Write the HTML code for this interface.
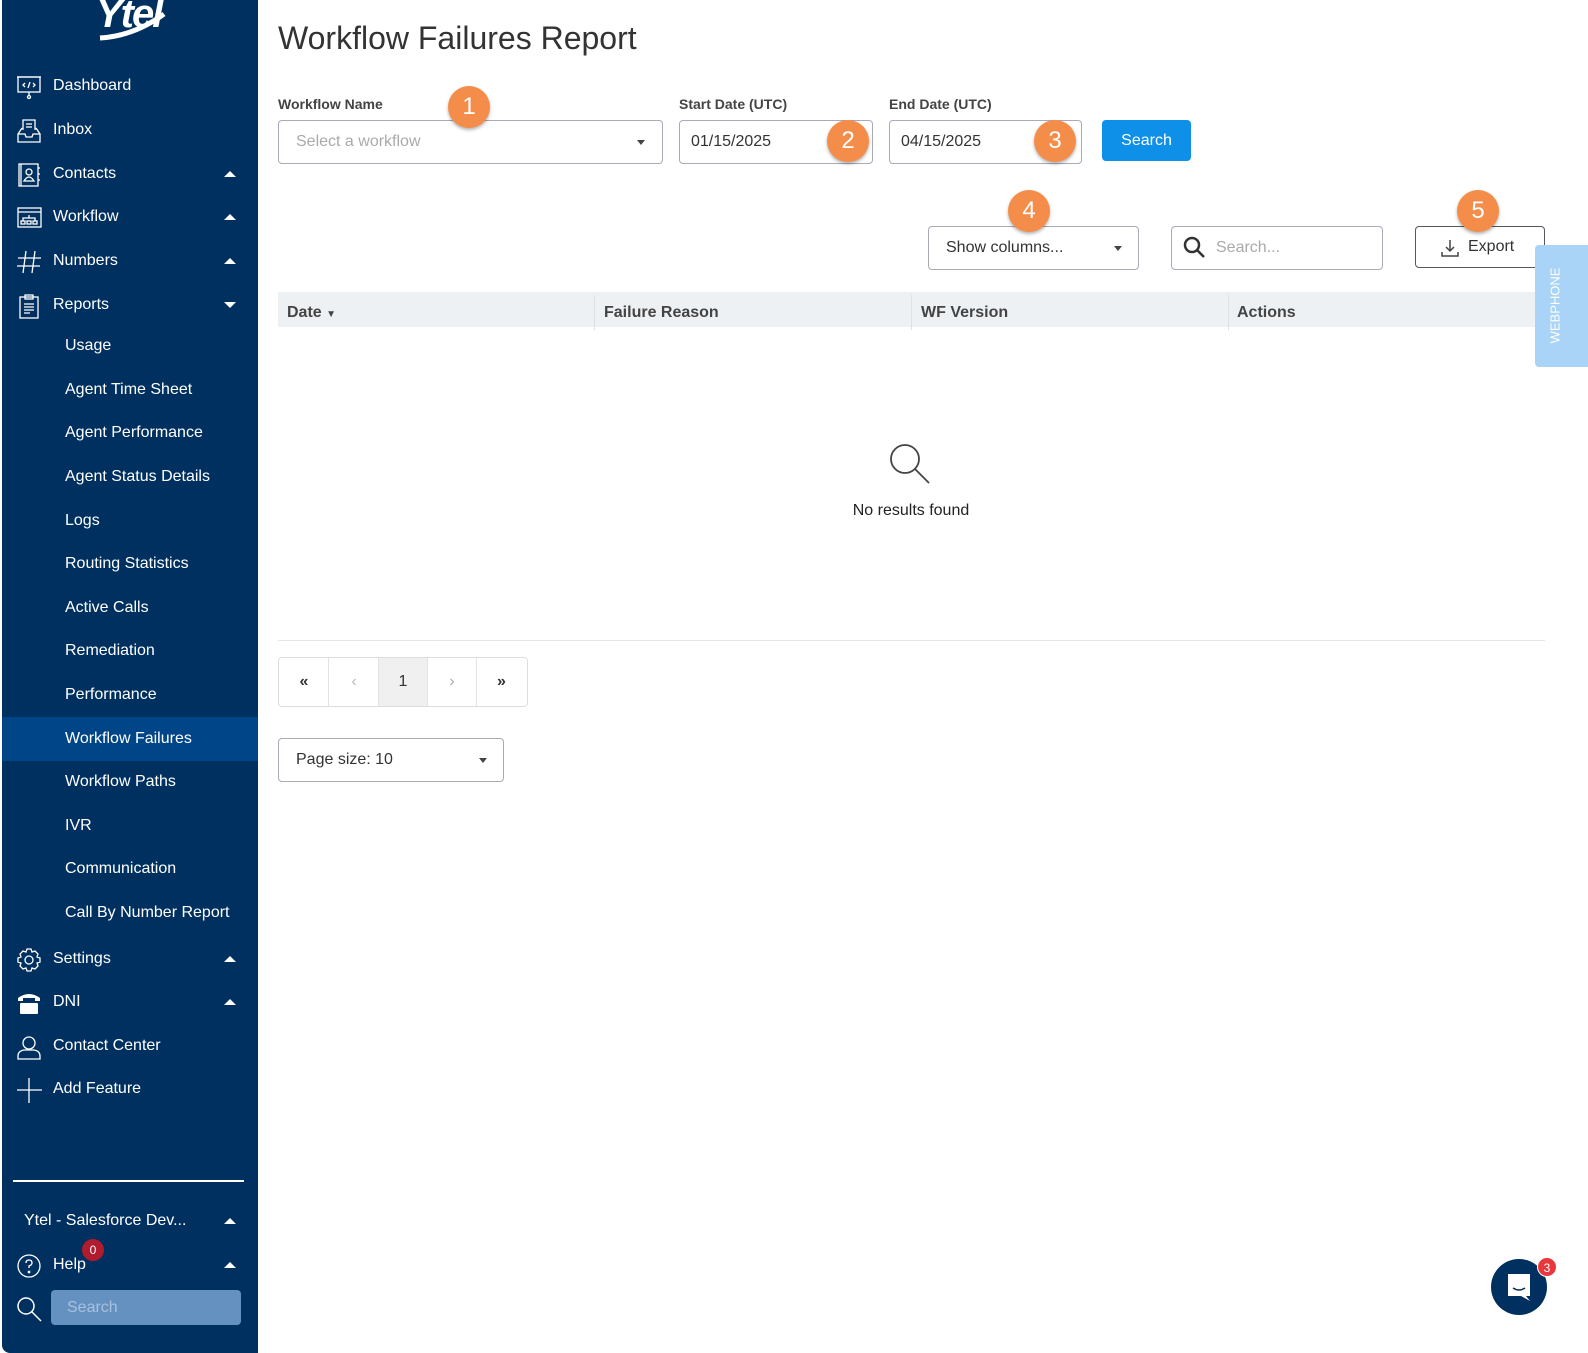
<!DOCTYPE html>
<html><head><meta charset="utf-8"><style>
*{box-sizing:border-box;margin:0;padding:0}
body{width:1588px;height:1353px;background:#fff;font-family:"Liberation Sans",sans-serif;position:relative;overflow:hidden;color:#333}
.sb{position:absolute;left:2px;top:0;width:256px;height:1353px;background:#00305f;color:#fff;border-bottom-left-radius:8px}
.it{position:absolute;left:0;width:256px;height:44px;font-size:16px;line-height:44px}
.it .ic{position:absolute;left:14px;top:10px;width:26px;height:26px}
.it .t{position:absolute;left:51px}
.it .ar{position:absolute;left:222px;top:19px;width:0;height:0;border-left:6px solid transparent;border-right:6px solid transparent;border-bottom:6px solid #fff}
.it .ar.d{border-bottom:0;border-top:6px solid #fff}
.sub{position:absolute;left:0;width:256px;height:44px;line-height:44px;font-size:16px;padding-left:63px}
.sub.a{background:#004587}
.abs{position:absolute}
.lbl{position:absolute;font-size:14px;font-weight:bold;color:#444}
.inp{position:absolute;border:1px solid #aab;border-radius:4px;height:44px;font-size:16px;line-height:42px;padding-left:17px;background:#fff}
.caret{position:absolute;width:0;height:0;border-left:4px solid transparent;border-right:4px solid transparent;border-top:5px solid #444}
.badge{position:absolute;width:42px;height:42px;border-radius:50%;background:#f58d4a;color:#fff;font-size:24px;text-align:center;line-height:42px;box-shadow:0 2px 3px rgba(0,0,0,.3)}
.th{position:absolute;top:295px;height:35px;line-height:35px;font-size:16px;font-weight:bold;color:#444;padding-left:9px;border-right:1px solid #dde1e5}
.pg{position:absolute;top:666px;width:49px;height:48px;line-height:48px;text-align:center;border-right:1px solid #e3e3e3;font-size:16px}
</style></head><body>
<div class="sb">
 <div class="abs" style="left:94px;top:-8px;font-size:40px;font-weight:bold;font-style:italic;letter-spacing:-2px">Ytel</div>
 <svg class="abs" style="left:92px;top:8px" width="80" height="34"><path d="M6 30 Q40 28 70 6" stroke="#fff" stroke-width="5" fill="none"/></svg>
 <div class="it" style="top:64px"><svg class="ic" viewBox="0 0 26 26" fill="none" stroke="#fff" stroke-width="1.3"><rect x="2" y="3" width="22" height="15"/><path d="M1 3h24M13 18v4"/><circle cx="13" cy="23" r="1.5"/><path d="M9 9l-2 2 2 2M17 9l2 2-2 2M14 8l-2 6"/></svg><span class="t">Dashboard</span></div>
 <div class="it" style="top:108px"><svg class="ic" viewBox="0 0 26 26" fill="none" stroke="#fff" stroke-width="1.3"><path d="M7 12V2h12v10M2 16l4-6M24 16l-4-6M2 16h7l1 3h6l1-3h7v8H2z"/><path d="M10 6h6M10 9h6"/></svg><span class="t">Inbox</span></div>
 <div class="it" style="top:152px"><svg class="ic" viewBox="0 0 26 26" fill="none" stroke="#fff" stroke-width="1.3"><rect x="3" y="2" width="19" height="22"/><path d="M5 2v22M22 6h2M22 12h2M22 18h2"/><circle cx="13" cy="10" r="3"/><path d="M8 19q5-8 10 0z"/></svg><span class="t">Contacts</span><span class="ar"></span></div>
 <div class="it" style="top:195px"><svg class="ic" viewBox="0 0 26 26" fill="none" stroke="#fff" stroke-width="1.3"><rect x="2" y="3" width="23" height="19"/><path d="M2 7h23M13 10v3M7 16v-3h12v3"/><rect x="5" y="16" width="4" height="3"/><rect x="11" y="16" width="4" height="3"/><rect x="17" y="16" width="4" height="3"/></svg><span class="t">Workflow</span><span class="ar"></span></div>
 <div class="it" style="top:239px"><svg class="ic" viewBox="0 0 26 26" fill="none" stroke="#fff" stroke-width="1.3"><path d="M10 2L7 24M19 2l-3 22M2 9h23M1 17h23"/></svg><span class="t">Numbers</span><span class="ar"></span></div>
 <div class="it" style="top:283px"><svg class="ic" viewBox="0 0 26 26" fill="none" stroke="#fff" stroke-width="1.3"><rect x="4" y="4" width="18" height="21"/><rect x="9" y="2" width="8" height="4"/><path d="M8 11h10M8 14h10M8 17h10M8 20h6"/></svg><span class="t">Reports</span><span class="ar d"></span></div>
 <div class="sub" style="top:324px">Usage</div>
 <div class="sub" style="top:368px">Agent Time Sheet</div>
 <div class="sub" style="top:411px">Agent Performance</div>
 <div class="sub" style="top:455px">Agent Status Details</div>
 <div class="sub" style="top:499px">Logs</div>
 <div class="sub" style="top:542px">Routing Statistics</div>
 <div class="sub" style="top:586px">Active Calls</div>
 <div class="sub" style="top:629px">Remediation</div>
 <div class="sub" style="top:673px">Performance</div>
 <div class="sub a" style="top:717px">Workflow Failures</div>
 <div class="sub" style="top:760px">Workflow Paths</div>
 <div class="sub" style="top:804px">IVR</div>
 <div class="sub" style="top:847px">Communication</div>
 <div class="sub" style="top:891px">Call By Number Report</div>
 <div class="it" style="top:937px"><svg class="ic" viewBox="0 0 26 26" fill="none" stroke="#fff" stroke-width="1.3"><circle cx="13" cy="13" r="4"/><path d="M11 2h4l1 3 3-1 3 3-1 3 3 1v4l-3 1 1 3-3 3-3-1-1 3h-4l-1-3-3 1-3-3 1-3-3-1v-4l3-1-1-3 3-3 3 1z"/></svg><span class="t">Settings</span><span class="ar"></span></div>
 <div class="it" style="top:980px"><svg class="ic" viewBox="0 0 26 26" fill="#fff"><path d="M2 8q11-8 22 0v3h-5V8H7v3H2z"/><rect x="4" y="13" width="18" height="11" rx="1"/></svg><span class="t">DNI</span><span class="ar"></span></div>
 <div class="it" style="top:1024px"><svg class="ic" viewBox="0 0 26 26" fill="none" stroke="#fff" stroke-width="1.3"><circle cx="13" cy="9" r="6"/><path d="M2 25v-3q0-5 6-6h10q6 1 6 6v3z"/></svg><span class="t">Contact Center</span></div>
 <div class="it" style="top:1067px"><svg class="ic" viewBox="0 0 26 26" fill="none" stroke="#fff" stroke-width="1.3"><path d="M13 1v25M1 13h25"/></svg><span class="t">Add Feature</span></div>
 <div class="abs" style="left:11px;top:1180px;width:231px;height:2px;background:#fff"></div>
 <div class="it" style="top:1199px"><span class="t" style="left:22px">Ytel - Salesforce Dev...</span><span class="ar"></span></div>
 <div class="it" style="top:1243px"><svg class="ic" viewBox="0 0 26 26" fill="none" stroke="#fff" stroke-width="1.3"><circle cx="13" cy="13" r="11"/><path d="M10 10q0-3 3-3t3 3q0 2-3 3v2"/><circle cx="13" cy="19" r=".7"/></svg><span class="t">Help</span><span class="ar"></span></div>
 <div class="abs" style="left:80px;top:1239px;width:22px;height:22px;border-radius:50%;background:#b01c2e;font-size:12px;text-align:center;line-height:22px">0</div>
 <svg class="abs" style="left:13px;top:1295px" width="28" height="28" fill="none" stroke="#fff" stroke-width="1.5"><circle cx="11" cy="11" r="8"/><path d="M17 17l9 9"/></svg>
 <div class="abs" style="left:49px;top:1290px;width:190px;height:35px;background:#6591c1;border-radius:4px;color:#a9c1dc;font-size:16px;line-height:35px;padding-left:16px">Search</div>
</div>

<div class="abs" style="left:278px;top:20px;font-size:32px;color:#333;font-weight:300">Workflow Failures Report</div>
<div class="lbl" style="left:278px;top:96px">Workflow Name</div>
<div class="lbl" style="left:679px;top:96px">Start Date (UTC)</div>
<div class="lbl" style="left:889px;top:96px">End Date (UTC)</div>
<div class="inp" style="left:278px;top:120px;width:385px;color:#aaa">Select a workflow<span class="caret" style="left:358px;top:19px"></span></div>
<div class="inp" style="left:679px;top:120px;width:194px;padding-left:11px">01/15/2025</div>
<div class="inp" style="left:889px;top:120px;width:193px;padding-left:11px">04/15/2025</div>
<div class="abs" style="left:1102px;top:120px;width:89px;height:41px;background:#0e8fe8;border-radius:4px;color:#fff;font-size:16px;text-align:center;line-height:41px">Search</div>
<div class="badge" style="left:448px;top:86px">1</div>
<div class="badge" style="left:827px;top:120px">2</div>
<div class="badge" style="left:1034px;top:120px">3</div>
<div class="inp" style="left:928px;top:226px;width:211px;color:#333">Show columns...<span class="caret" style="left:185px;top:19px"></span></div>
<div class="inp" style="left:1171px;top:226px;width:212px;padding-left:44px;color:#aaa">Search...</div>
<svg class="abs" style="left:1182px;top:235px" width="26" height="26" fill="none" stroke="#333" stroke-width="2.5"><circle cx="10" cy="10" r="7"/><path d="M15 15l7 7"/></svg>
<div class="inp" style="left:1415px;top:226px;width:130px;height:42px;line-height:40px;padding-left:52px;border-color:#556">Export</div>
<svg class="abs" style="left:1440px;top:238px" width="20" height="20" fill="none" stroke="#444" stroke-width="1.5"><path d="M10 2v11M6 9l4 4 4-4M2 14v4h16v-4"/></svg>
<div class="badge" style="left:1008px;top:190px">4</div>
<div class="badge" style="left:1457px;top:190px">5</div>

<div class="abs" style="left:278px;top:292px;width:1267px;height:35px;background:#eef1f4"></div>
<div class="th" style="left:278px;width:317px">Date <span style="font-size:10px">▼</span></div>
<div class="th" style="left:595px;width:317px">Failure Reason</div>
<div class="th" style="left:912px;width:317px">WF Version</div>
<div class="th" style="left:1228px;width:317px;border:0">Actions</div>
<div class="abs" style="left:1535px;top:245px;width:53px;height:122px;background:#a9d4f7;border-radius:4px 0 0 4px"></div>
<div class="abs" style="left:1515px;top:298px;width:80px;transform:rotate(-90deg);color:#fff;font-size:13px;text-align:center">WEBPHONE</div>

<svg class="abs" style="left:888px;top:442px" width="44" height="44" fill="none" stroke="#444" stroke-width="1.8"><circle cx="17" cy="17" r="14"/><path d="M27 27l14 14"/></svg>
<div class="abs" style="left:778px;top:502px;width:266px;text-align:center;font-size:16px;color:#222">No results found</div>
<div class="abs" style="left:278px;top:640px;width:1267px;height:1px;background:#e5e5e5"></div>

<div class="abs" style="left:278px;top:657px;width:250px;height:50px;border:1px solid #ddd;border-radius:4px"></div>
<div class="pg" style="left:280px;top:658px;font-weight:bold">«</div>
<div class="pg" style="left:330px;top:658px;color:#bbb">‹</div>
<div class="pg" style="left:379px;top:658px;background:#f0f0f0">1</div>
<div class="pg" style="left:428px;top:658px;color:#aaa">›</div>
<div class="pg" style="left:477px;top:658px;border:0;font-weight:bold">»</div>
<div class="inp" style="left:278px;top:738px;width:226px">Page size: 10<span class="caret" style="left:200px;top:19px"></span></div>

<div class="abs" style="left:1491px;top:1259px;width:56px;height:56px;border-radius:50%;background:#00305f"></div>
<svg class="abs" style="left:1505px;top:1272px" width="28" height="30"><path d="M3 2h22v22h-4l4 5-9-5H3z" fill="#fff"/><path d="M8 16q6 4 12 0" stroke="#00305f" stroke-width="1.5" fill="none"/></svg>
<div class="abs" style="left:1537px;top:1257px;width:20px;height:20px;border-radius:50%;background:#e8383d;color:#fff;font-size:12px;text-align:center;line-height:20px;border:1px solid #fff">3</div>
</body></html>
